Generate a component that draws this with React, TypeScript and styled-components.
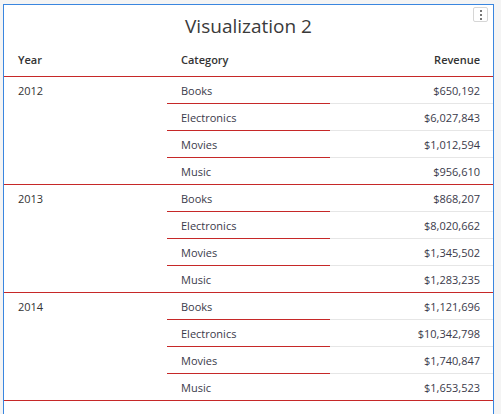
import React from "react";
import styled, { createGlobalStyle } from "styled-components";

const Global = createGlobalStyle`
  html, body { margin: 0; padding: 0; background: #f4f4f4; }
  body { font-family: "Open Sans", "Liberation Sans", sans-serif; color: #333; }
`;

const Card = styled.div`
  position: relative;
  box-sizing: border-box;
  width: 491px;
  height: 430px;
  margin: 4px 0 0 3px;
  background: #fff;
  border: 1px solid #3a86df;
`;

const Title = styled.h2`
  margin: 7px 0 0;
  font-size: 19px;
  line-height: 28px;
  font-weight: 400;
  text-align: center;
  color: #3a3a3a;
`;

const MenuButton = styled.button`
  position: absolute;
  top: 2px;
  right: 5px;
  box-sizing: border-box;
  width: 15px;
  height: 15px;
  padding: 0;
  border: 1px solid #d6d6d6;
  border-radius: 2px;
  background: #fff;
  display: flex;
  flex-direction: column;
  align-items: center;
  justify-content: center;
  gap: 2px;
`;

const Dot = styled.span`
  width: 2px;
  height: 2px;
  background: #777;
`;

const Row = styled.div`
  display: grid;
  grid-template-columns: 163px 163px 1fr;
`;

const HeaderRow = styled(Row)`
  margin-top: 7px;
  border-bottom: 1px solid #c62828;
`;

const HeadCell = styled.div<{ $right?: boolean }>`
  padding: 5px 13px 9px 14px;
  font-size: 11px;
  line-height: 15px;
  font-weight: 600;
  color: #333;
  text-align: ${(p) => (p.$right ? "right" : "left")};
`;

const Group = styled(Row)`
  grid-template-rows: 27px 27px 27px 26px;
  border-bottom: 1px solid #c62828;
`;

const YearCell = styled.div`
  grid-row: 1 / span 4;
  grid-column: 1;
  padding: 6px 14px;
  font-size: 11px;
  line-height: 15px;
`;

const CatCell = styled.div<{ $last?: boolean }>`
  grid-column: 2;
  box-sizing: border-box;
  padding: 6px 14px;
  font-size: 11px;
  line-height: 15px;
  color: #3a3a4a;
  border-bottom: ${(p) => (p.$last ? "none" : "1px solid #c62828")};
`;

const RevCell = styled.div<{ $last?: boolean }>`
  grid-column: 3;
  box-sizing: border-box;
  padding: 6px 13px;
  font-size: 11px;
  line-height: 15px;
  text-align: right;
  color: #3a3a4a;
  border-bottom: ${(p) => (p.$last ? "none" : "1px solid #e6e6e6")};
`;

const data = [
  { year: "2012", rows: [["Books", "$650,192"], ["Electronics", "$6,027,843"], ["Movies", "$1,012,594"], ["Music", "$956,610"]] },
  { year: "2013", rows: [["Books", "$868,207"], ["Electronics", "$8,020,662"], ["Movies", "$1,345,502"], ["Music", "$1,283,235"]] },
  { year: "2014", rows: [["Books", "$1,121,696"], ["Electronics", "$10,342,798"], ["Movies", "$1,740,847"], ["Music", "$1,653,523"]] },
];

export default function App() {
  return (
    <>
      <Global />
      <Card>
        <Title>Visualization 2</Title>
        <MenuButton aria-label="menu">
          <Dot />
          <Dot />
          <Dot />
        </MenuButton>
        <HeaderRow>
          <HeadCell>Year</HeadCell>
          <HeadCell>Category</HeadCell>
          <HeadCell $right>Revenue</HeadCell>
        </HeaderRow>
        {data.map((g) => (
          <Group key={g.year}>
            <YearCell>{g.year}</YearCell>
            {g.rows.map(([c, v], i) => (
              <React.Fragment key={c}>
                <CatCell $last={i === 3} style={{ gridRow: i + 1 }}>{c}</CatCell>
                <RevCell $last={i === 3} style={{ gridRow: i + 1 }}>{v}</RevCell>
              </React.Fragment>
            ))}
          </Group>
        ))}
      </Card>
    </>
  );
}
